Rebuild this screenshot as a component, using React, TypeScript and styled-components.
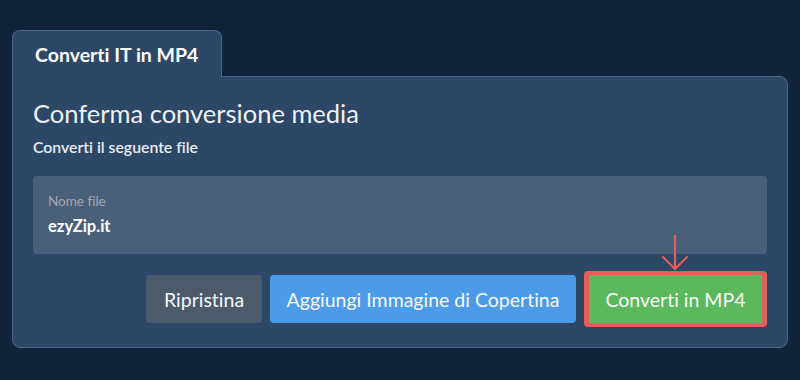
import React from "react";
import styled, { createGlobalStyle } from "styled-components";

const Global = createGlobalStyle`
  html, body { margin: 0; padding: 0; background: #0f2339; }
  body {
    font-family: Lato, "Noto Sans", sans-serif;
    color: #ffffff;
    font-variant-ligatures: no-common-ligatures;
  }
  * { box-sizing: border-box; }
`;

const Page = styled.div`
  width: 800px;
  height: 380px;
  padding: 30px 12px 0 12px;
  display: flex;
  flex-direction: column;
`;

const Tab = styled.div`
  align-self: flex-start;
  width: 210px;
  height: 47px;
  padding: 0 0 0 22px;
  display: flex;
  align-items: center;
  background: #2c4866;
  border: 1px solid #4d6685;
  border-bottom: none;
  border-radius: 8px 8px 0 0;
  font-size: 19.5px;
  font-weight: 700;
  color: #ffffff;
  margin-bottom: -1px;
  position: relative;
  z-index: 1;
`;

const Panel = styled.div`
  background: #2c4866;
  border: 1px solid #4d6685;
  border-radius: 0 8px 8px 8px;
  padding: 21px 20px 20px 20px;
  display: flex;
  flex-direction: column;
`;

const Title = styled.h2`
  margin: 0;
  font-size: 25.5px;
  font-weight: 400;
  color: #eef1f5;
  line-height: 30px;
`;

const Subtitle = styled.div`
  margin-top: 10px;
  font-size: 15.8px;
  font-weight: 600;
  color: #e8ecf1;
  line-height: 18px;
`;

const Field = styled.div`
  margin-top: 20px;
  height: 78px;
  background: #4a5f78;
  border-radius: 4px;
  padding: 17px 15px 0 15px;
  display: flex;
  flex-direction: column;
`;

const FieldLabel = styled.div`
  font-size: 13.5px;
  color: #a0abb9;
  line-height: 16px;
`;

const FieldValue = styled.div`
  margin-top: 7px;
  font-size: 16.5px;
  font-weight: 700;
  color: #ffffff;
  line-height: 20px;
`;

const Actions = styled.div`
  margin-top: 17px;
  display: flex;
  justify-content: flex-end;
  align-items: center;
  gap: 8px;
`;

const Button = styled.button<{ $tone: "grey" | "blue" | "green" }>`
  height: 48px;
  padding: 0 ${(p) => (p.$tone === "grey" ? "18px" : "16.5px")};
  border: none;
  border-radius: ${(p) => (p.$tone === "green" ? "0" : "4px")};
  font-family: Lato, "Noto Sans", sans-serif;
  font-variant-ligatures: no-common-ligatures;
  font-size: 19.5px;
  font-weight: 400;
  color: #f7f9fb;
  cursor: pointer;
  background: ${(p) =>
    p.$tone === "grey" ? "#4b5b6b" : p.$tone === "blue" ? "#4b9be8" : "#5cb85c"};
`;

const Highlight = styled.div`
  position: relative;
  border: 4px solid #e0605a;
  border-left-width: 5px;
  border-right-width: 5px;
  border-radius: 4px;
  display: flex;
`;

const Arrow = styled.svg`
  position: absolute;
  left: 50%;
  top: -40px;
  transform: translateX(-50%);
`;

export default function App() {
  return (
    <>
      <Global />
      <Page>
        <Tab>Converti IT in MP4</Tab>
        <Panel>
          <Title>Conferma conversione media</Title>
          <Subtitle>Converti il seguente file</Subtitle>
          <Field>
            <FieldLabel>Nome file</FieldLabel>
            <FieldValue>ezyZip.it</FieldValue>
          </Field>
          <Actions>
            <Button $tone="grey">Ripristina</Button>
            <Button $tone="blue">Aggiungi Immagine di Copertina</Button>
            <Highlight>
              <Arrow width="30" height="36" viewBox="0 0 30 36">
                <path
                  d="M15 1 V34 M3 22 L15 34 L27 22"
                  fill="none"
                  stroke="#e0605a"
                  strokeWidth="2.2"
                  strokeLinecap="round"
                />
              </Arrow>
              <Button $tone="green">Converti in MP4</Button>
            </Highlight>
          </Actions>
        </Panel>
      </Page>
    </>
  );
}
